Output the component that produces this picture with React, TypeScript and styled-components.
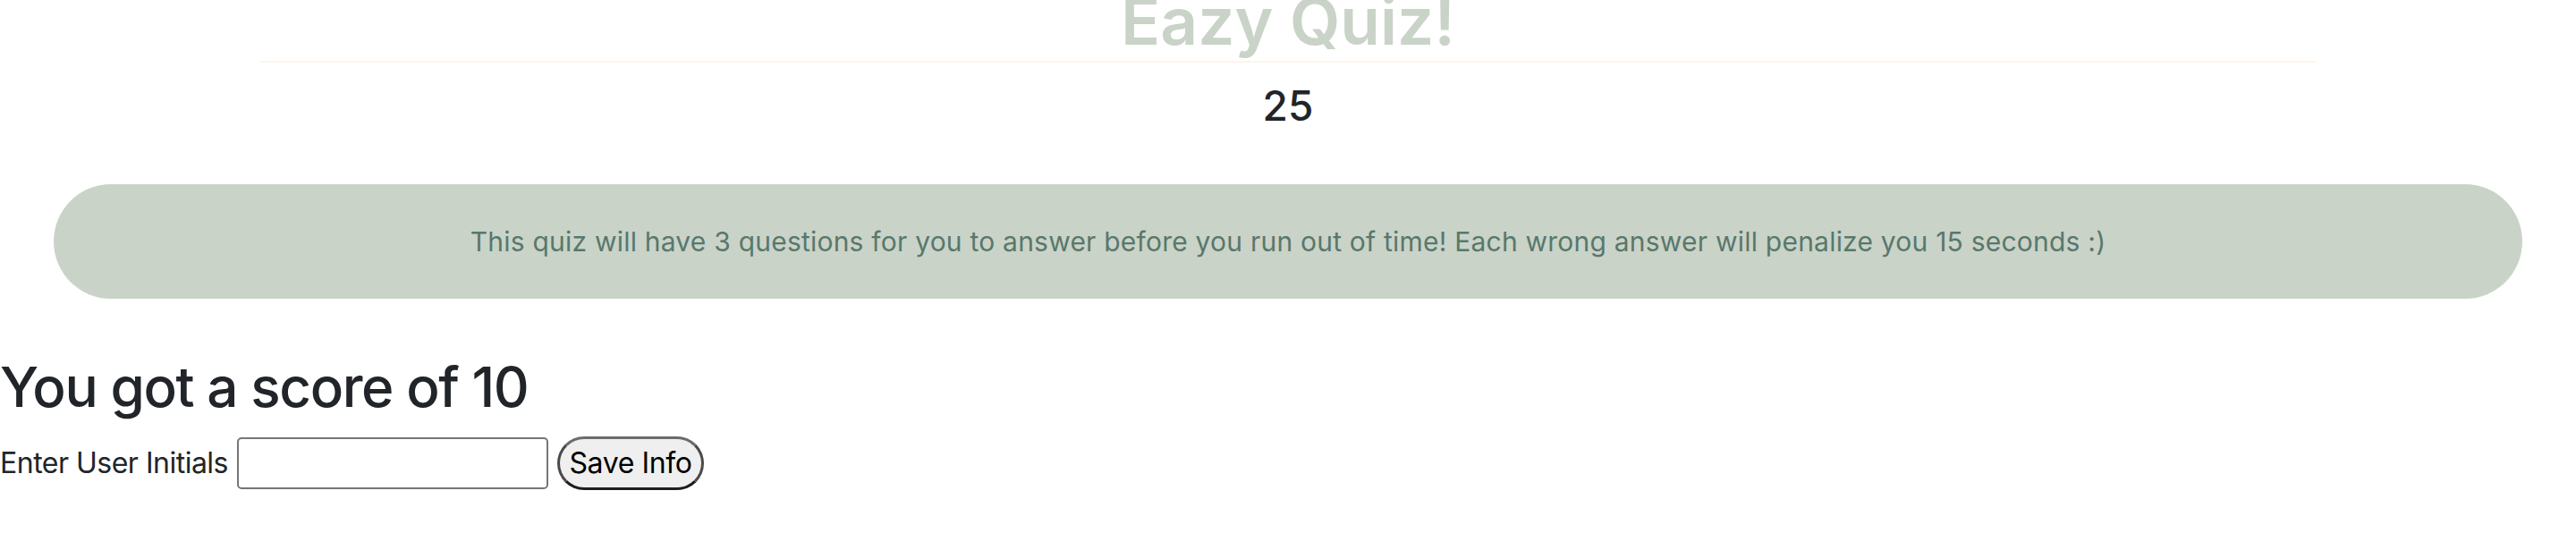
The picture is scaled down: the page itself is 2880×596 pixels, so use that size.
import React from "react";
import styled, { createGlobalStyle } from "styled-components";

const GlobalStyle = createGlobalStyle`
  html, body {
    margin: 0;
    padding: 0;
    background: #ffffff;
  }
  body {
    font-family: Inter, "Noto Sans", "Liberation Sans", sans-serif;
    color: #212529;
    overflow: hidden;
  }
`;

const Page = styled.div`
  width: 2880px;
  height: 596px;
  display: flex;
  flex-direction: column;
`;

const Header = styled.header`
  display: flex;
  flex-direction: column;
  align-items: center;
`;

const Title = styled.h1`
  margin: -20px 0 0;
  font-size: 73px;
  line-height: 1.2;
  font-weight: 600;
  color: #cad3c8;
`;

const Rule = styled.hr`
  margin: 0 auto;
  width: 2300px;
  border: 0;
  border-top: 2px solid #fcf6ea;
`;

const Timer = styled.div`
  margin-top: 21px;
  font-size: 46px;
  line-height: 1.2;
  font-weight: 500;
  color: #212529;
`;

const Banner = styled.section`
  margin: 60px 60px 0;
  height: 128px;
  border-radius: 64px;
  background: #cad3c8;
  display: flex;
  align-items: center;
  justify-content: center;
`;

const BannerText = styled.p`
  margin: 0;
  font-size: 30px;
  letter-spacing: 0.22px;
  color: #58786c;
`;

const Result = styled.div`
  margin-top: 61px;
  display: flex;
  flex-direction: column;
`;

const ScoreHeading = styled.h2`
  margin: 0;
  font-size: 62px;
  line-height: 1.24;
  letter-spacing: -1.4px;
  font-weight: 500;
  color: #212529;
`;

const FormRow = styled.form`
  margin-top: 16px;
  display: flex;
  align-items: center;
  gap: 10px;
`;

const Label = styled.label`
  font-size: 32px;
  letter-spacing: -0.5px;
  color: #212529;
`;

const TextInput = styled.input`
  box-sizing: border-box;
  width: 348px;
  height: 58px;
  border: 2px solid #767676;
  border-radius: 5px;
  background: #fff;
  font-size: 32px;
  padding: 0 8px;
`;

const SaveButton = styled.button`
  box-sizing: border-box;
  width: 164px;
  height: 60px;
  border-radius: 30px;
  border: 3px solid;
  border-color: #6b6b6b #4a4a4a #1e1e1e #4a4a4a;
  background: #efefef;
  color: #000;
  font-family: Inter, "Noto Sans", sans-serif;
  font-size: 32px;
  letter-spacing: -0.4px;
  padding: 0;
`;

export default function App() {
  return (
    <>
      <GlobalStyle />
      <Page>
        <Header>
          <Title>Eazy Quiz!</Title>
        </Header>
        <Rule />
        <Header>
          <Timer>25</Timer>
        </Header>
        <Banner>
          <BannerText>
            This quiz will have 3 questions for you to answer before you run out of time! Each wrong answer will penalize you 15 seconds :)
          </BannerText>
        </Banner>
        <Result>
          <ScoreHeading>You got a score of 10</ScoreHeading>
          <FormRow onSubmit={(e) => e.preventDefault()}>
            <Label htmlFor="initials">Enter User Initials</Label>
            <TextInput id="initials" type="text" />
            <SaveButton type="submit">Save Info</SaveButton>
          </FormRow>
        </Result>
      </Page>
    </>
  );
}
